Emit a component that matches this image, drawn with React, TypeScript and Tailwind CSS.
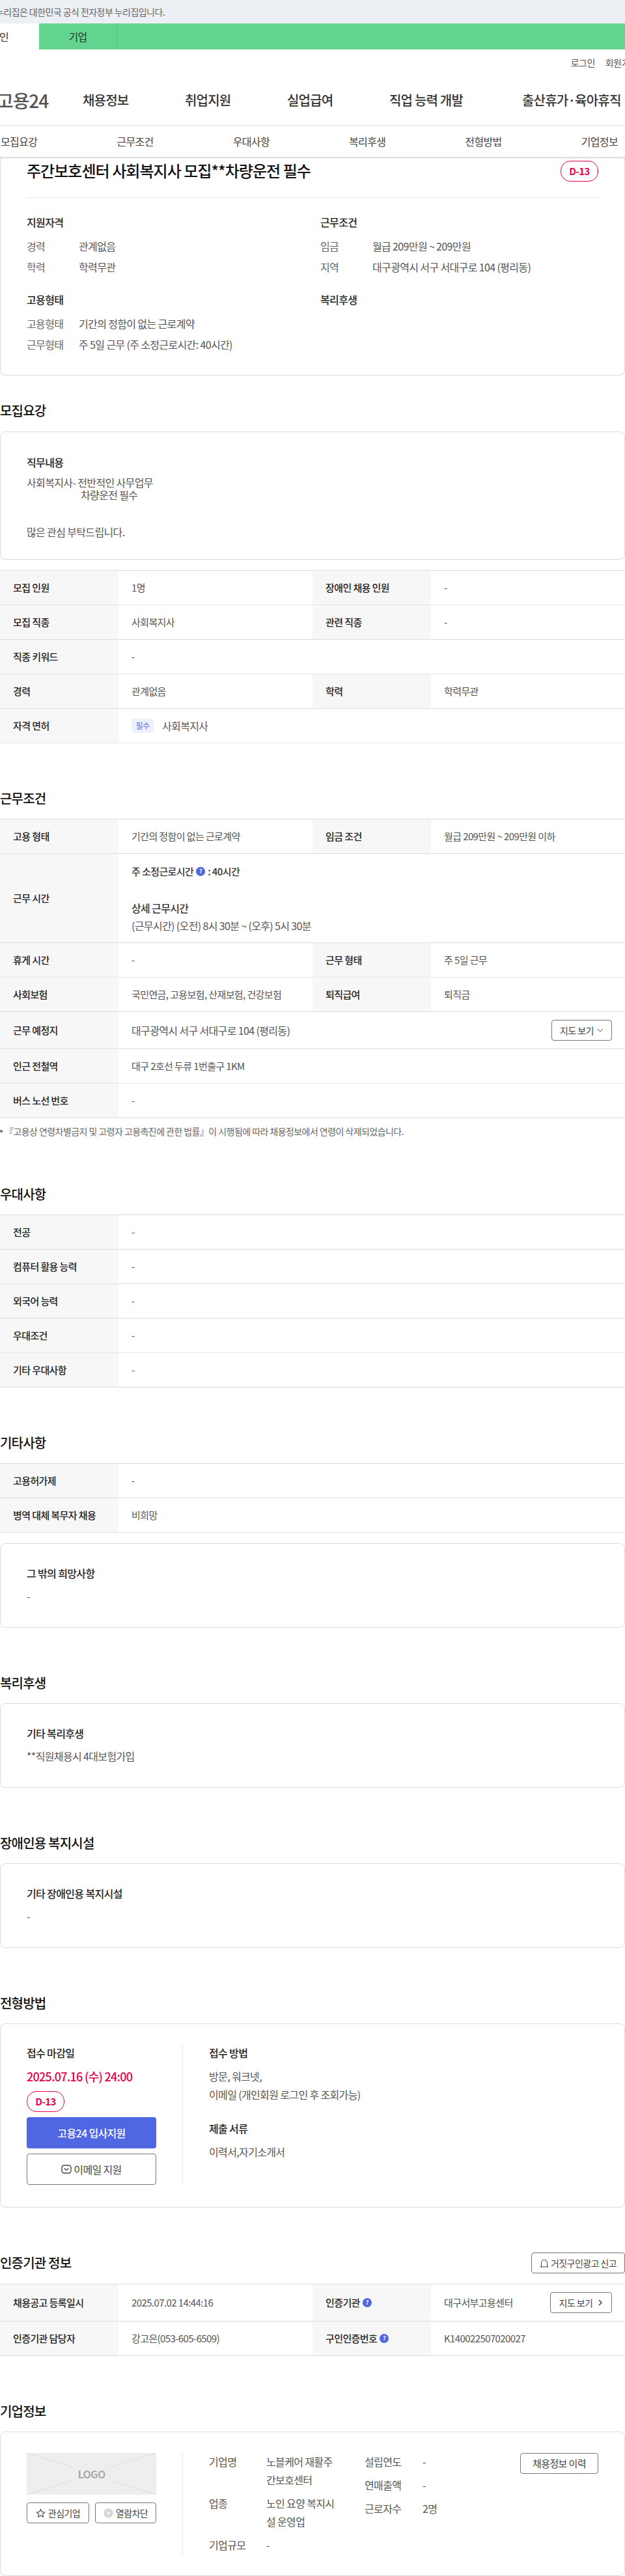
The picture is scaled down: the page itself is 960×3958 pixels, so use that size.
import type { ReactNode } from 'react';

type Cell = { label: ReactNode; value: ReactNode };

function Help() {
  return (
    <span className="inline-flex w-[14px] h-[14px] rounded-full bg-[#4f67e3] text-white text-[9px] font-bold items-center justify-center mx-[4px]">?</span>
  );
}

function Row({ cells, h = 'h-[53px]', thick = false }: { cells: Cell[]; h?: string; thick?: boolean }) {
  return (
    <div className={`flex border-b ${thick ? 'border-[#dddddd]' : 'border-[#e5e5e5]'} ${h}`}>
      {cells.map((c, i) => (
        <div key={i} className={`flex ${cells.length === 1 ? 'flex-1' : 'w-[480px]'}`}>
          <div className="w-[182px] shrink-0 bg-[#f7f7f7] pl-[20px] flex items-center font-medium text-[#222222]">{c.label}</div>
          <div className="flex-1 pl-[20px] flex items-center text-[#555555]">{c.value}</div>
        </div>
      ))}
    </div>
  );
}

function Heading({ children, className = '' }: { children: ReactNode; className?: string }) {
  return <h2 className={`text-[20px] font-medium text-[#111111] leading-[28px] ${className}`}>{children}</h2>;
}

function Table({ children, className = 'mt-[17px]' }: { children: ReactNode; className?: string }) {
  return <div className={`${className} border-t border-[#dddddd] text-[15px]`}>{children}</div>;
}

function TextCard({ title, text, className = 'mt-[17px]' }: { title: string; text: string; className?: string }) {
  return (
    <div className={`border border-[#dddddd] rounded-[8px] px-[40px] pt-[33px] h-[130px] text-[16px] ${className}`}>
      <div className="font-medium text-[#222222] leading-[24px]">{title}</div>
      <div className="mt-[11px] text-[#555555] leading-[24px]">{text}</div>
    </div>
  );
}

function Badge() {
  return (
    <span className="inline-flex w-[58px] h-[32px] rounded-[15px] border border-[#e6004d] text-[#e6004d] items-center justify-center text-[15px] font-semibold">D-13</span>
  );
}

function Spec({ k, v, first = false }: { k: string; v: string; first?: boolean }) {
  return (
    <div className={`flex leading-[24px] ${first ? 'mt-[13px]' : 'mt-[8px]'}`}>
      <span className="w-[80px] shrink-0 text-[#666666]">{k}</span>
      <span className="text-[#555555]">{v}</span>
    </div>
  );
}

export default function App() {
  return (
    <div className='font-["Noto_Sans_CJK_KR","Noto_Sans",sans-serif] w-[960px] h-[3958px] overflow-hidden bg-white text-[16px] [&_*]:tracking-[-0.04em]'>
      <div className="h-[36px] bg-[#eceff4] flex items-center text-[14px] text-[#666666] whitespace-nowrap">
        <span className="-ml-[7px]">누리집은 대한민국 공식 전자정부 누리집입니다.</span>
      </div>
      <div className="h-[40px] flex bg-[#62d490] text-[#333333] text-[16px]">
        <div className="w-[60px] bg-white flex items-center"><span className="-ml-[15px]">개인</span></div>
        <div className="w-[120px] border-r border-[#58c585] flex items-center justify-center">기업</div>
      </div>
      <div className="h-[40px] flex justify-end items-center gap-[16px] text-[14px] text-[#555555] whitespace-nowrap">
        <span>로그인</span>
        <span className="-mr-[19px]">회원가입</span>
      </div>
      <div className="h-[77px] border-b border-[#eeeeee] flex items-center text-[20px] font-medium text-[#333333] whitespace-nowrap">
        <div className="w-[74px] shrink-0 flex justify-end">
          <span className="text-[28px] text-[#555555] font-medium">고용24</span>
        </div>
        <nav className="flex ml-[53px]">
          <span className="w-[157px]">채용정보</span>
          <span className="w-[157px]">취업지원</span>
          <span className="w-[157px]">실업급여</span>
          <span className="w-[204px]">직업 능력 개발</span>
          <span>출산휴가·육아휴직</span>
        </nav>
      </div>
      <div className="h-[48px] flex justify-between items-center pl-[1px] pr-[11px] text-[#444444] shadow-[0_1px_3px_rgba(0,0,0,0.25)] relative z-10 bg-white">
        <span>모집요강</span>
        <span>근무조건</span>
        <span>우대사항</span>
        <span>복리후생</span>
        <span>전형방법</span>
        <span>기업정보</span>
      </div>

      {/* 요약 카드 */}
      <section className="border border-t-0 border-[#dddddd] rounded-b-[8px] h-[336px] px-[40px]">
        <div className="flex justify-between border-b border-[#e8e8e8] h-[63px] pt-[5px]">
          <h1 className="text-[24px] font-medium text-[#111111] leading-[32px]">주간보호센터 사회복지사 모집**차량운전 필수</h1>
          <span className="mt-[1px]"><Badge /></span>
        </div>
        <div className="flex mt-[25px]">
          <div className="w-[451px]">
            <div className="font-medium text-[#222222] leading-[24px]">지원자격</div>
            <Spec first k="경력" v="관계없음" />
            <Spec k="학력" v="학력무관" />
            <div className="font-medium text-[#222222] leading-[24px] mt-[26px]">고용형태</div>
            <Spec first k="고용형태" v="기간의 정함이 없는 근로계약" />
            <Spec k="근무형태" v="주 5일 근무 (주 소정근로시간: 40시간)" />
          </div>
          <div>
            <div className="font-medium text-[#222222] leading-[24px]">근무조건</div>
            <Spec first k="임금" v="월급 209만원 ~ 209만원" />
            <Spec k="지역" v="대구광역시 서구 서대구로 104 (평리동)" />
            <div className="font-medium text-[#222222] leading-[24px] mt-[26px]">복리후생</div>
          </div>
        </div>
      </section>

      <Heading className="mt-[40px]">모집요강</Heading>
      <div className="mt-[18px] border border-[#dddddd] rounded-[8px] h-[197px] px-[40px] pt-[34px] text-[#555555] leading-[19px]">
        <div className="font-medium text-[#222222] leading-[24px]">직무내용</div>
        <div className="mt-[10px]">사회복지사- 전반적인 사무업무</div>
        <div className="pl-[83px]">차량운전 필수</div>
        <div className="mt-[38px]">많은 관심 부탁드립니다.</div>
      </div>
      <Table className="mt-[16px]">
        <Row cells={[{ label: '모집 인원', value: '1명' }, { label: '장애인 채용 인원', value: '-' }]} />
        <Row thick cells={[{ label: '모집 직종', value: '사회복지사' }, { label: '관련 직종', value: '-' }]} />
        <Row cells={[{ label: '직종 키워드', value: '-' }]} />
        <Row thick cells={[{ label: '경력', value: '관계없음' }, { label: '학력', value: '학력무관' }]} />
        <Row
          cells={[{
            label: '자격 면허',
            value: (
              <span className="flex items-center gap-[13px]">
                <span className="w-[34px] h-[22px] rounded-[4px] bg-[#eef0fd] text-[#5b6ee8] text-[12px] flex items-center justify-center">필수</span>
                <span className="text-[16px]">사회복지사</span>
              </span>
            ),
          }]}
        />
      </Table>

      <Heading className="mt-[71px]">근무조건</Heading>
      <Table>
        <Row thick cells={[{ label: '고용 형태', value: '기간의 정함이 없는 근로계약' }, { label: '임금 조건', value: '월급 209만원 ~ 209만원 이하' }]} />
        <Row
          h="h-[137px]"
          thick
          cells={[{
            label: '근무 시간',
            value: (
              <div className="leading-[24px] text-[16px]">
                <div className="font-medium text-[#333333] flex items-center text-[15px]">주 소정근로시간<Help />: 40시간</div>
                <div className="font-medium text-[#333333] mt-[32px]">상세 근무시간</div>
                <div className="mt-[3px]">(근무시간) (오전) 8시 30분 ~ (오후) 5시 30분</div>
              </div>
            ),
          }]}
        />
        <Row cells={[{ label: '휴게 시간', value: '-' }, { label: '근무 형태', value: '주 5일 근무' }]} />
        <Row thick cells={[{ label: '사회보험', value: '국민연금, 고용보험, 산재보험, 건강보험' }, { label: '퇴직급여', value: '퇴직금' }]} />
        <Row
          h="h-[57px]"
          thick
          cells={[{
            label: '근무 예정지',
            value: (
              <div className="flex flex-1 items-center justify-between pr-[20px] text-[16px]">
                <span>대구광역시 서구 서대구로 104 (평리동)</span>
                <button className="w-[93px] h-[32px] border border-[#777777] rounded-[4px] text-[#444444] text-[14px] flex items-center justify-center gap-[5px]">
                  지도 보기
                  <svg width="10" height="10" viewBox="0 0 10 10" fill="none" stroke="#444444"><path d="M1 3l4 4 4-4" /></svg>
                </button>
              </div>
            ),
          }]}
        />
        <Row cells={[{ label: '인근 전철역', value: '대구 2호선 두류 1번출구 1KM' }]} />
        <Row thick cells={[{ label: '버스 노선 번호', value: '-' }]} />
      </Table>
      <div className="mt-[10px] flex items-center text-[14px] text-[#666666] leading-[20px] whitespace-nowrap">
        <span className="w-[4px] h-[4px] rounded-full bg-[#666666] mr-[3px] shrink-0" />
        『고용상 연령차별금지 및 고령자 고용촉진에 관한 법률』이 시행됨에 따라 채용정보에서 연령이 삭제되었습니다.
      </div>

      <Heading className="mt-[73px]">우대사항</Heading>
      <Table>
        <Row thick cells={[{ label: '전공', value: '-' }]} />
        <Row thick cells={[{ label: '컴퓨터 활용 능력', value: '-' }]} />
        <Row thick cells={[{ label: '외국어 능력', value: '-' }]} />
        <Row cells={[{ label: '우대조건', value: '-' }]} />
        <Row thick cells={[{ label: '기타 우대사항', value: '-' }]} />
      </Table>

      <Heading className="mt-[71px]">기타사항</Heading>
      <Table>
        <Row thick cells={[{ label: '고용허가제', value: '-' }]} />
        <Row cells={[{ label: '병역 대체 복무자 채용', value: '비희망' }]} />
      </Table>
      <TextCard className="mt-[16px]" title="그 밖의 희망사항" text="-" />

      <Heading className="mt-[71px]">복리후생</Heading>
      <TextCard title="기타 복리후생" text="**직원채용시 4대보험가입" />
      <Heading className="mt-[71px]">장애인용 복지시설</Heading>
      <TextCard title="기타 장애인용 복지시설" text="-" />

      <Heading className="mt-[71px]">전형방법</Heading>
      <div className="mt-[17px] border border-[#dddddd] rounded-[8px] h-[283px] px-[40px] pt-[32px] flex">
        <div className="w-[240px] pr-[40px] border-r border-[#e8e8e8] h-[216px] shrink-0">
          <div className="font-medium text-[#222222] leading-[24px]">접수 마감일</div>
          <div className="mt-[12px] text-[#e6004d] font-medium text-[18px] leading-[24px] whitespace-nowrap">2025.07.16 (수) 24:00</div>
          <div className="mt-[11px] h-[32px]"><Badge /></div>
          <button className="mt-[8px] w-[199px] h-[48px] rounded-[4px] bg-[#4f67e3] text-white font-medium block">고용24 입사지원</button>
          <button className="mt-[8px] w-[199px] h-[48px] rounded-[4px] border border-[#777777] text-[#444444] flex items-center justify-center gap-[3px]">
            <svg width="16" height="16" viewBox="0 0 16 16" fill="none" stroke="#444444" strokeWidth="1.4">
              <rect x="1" y="2" width="14" height="12" rx="3.5" />
              <path d="M4.5 6.5L8 9.5l3.5-3" />
            </svg>
            이메일 지원
          </button>
        </div>
        <div className="pl-[40px] text-[#555555]">
          <div className="font-medium text-[#222222] leading-[24px]">접수 방법</div>
          <div className="mt-[10px] leading-[28px]">방문, 워크넷,<br />이메일 (개인회원 로그인 후 조회가능)</div>
          <div className="font-medium text-[#222222] leading-[24px] mt-[26px]">제출 서류</div>
          <div className="mt-[10px] leading-[28px]">이력서,자기소개서</div>
        </div>
      </div>

      <div className="mt-[69px] flex justify-between items-center">
        <Heading>인증기관 정보</Heading>
        <button className="w-[144px] h-[32px] border border-[#777777] rounded-[4px] text-[#444444] text-[14px] flex items-center justify-center gap-[3px]">
          <svg width="14" height="14" viewBox="0 0 14 14" fill="none" stroke="#444444" strokeWidth="1"><path d="M2.5 13V6.5a4.5 4.5 0 019 0V13M.5 13h13M8.5 4.5l1 1" /></svg>
          거짓구인광고 신고
        </button>
      </div>
      <Table className="mt-[16px]">
        <Row
          h="h-[57px]"
          thick
          cells={[
            { label: '채용공고 등록일시', value: '2025.07.02 14:44:16' },
            {
              label: <>인증기관<Help /></>,
              value: (
                <div className="flex flex-1 items-center justify-between pr-[20px]">
                  <span>대구서부고용센터</span>
                  <button className="w-[95px] h-[32px] border border-[#777777] rounded-[4px] text-[#444444] text-[14px] flex items-center justify-center gap-[8px]">
                    지도 보기
                    <svg width="8" height="12" viewBox="0 0 8 12" fill="none" stroke="#444444" strokeWidth="1.6"><path d="M2 2l4 4-4 4" /></svg>
                  </button>
                </div>
              ),
            },
          ]}
        />
        <Row
          thick
          cells={[{ label: '인증기관 담당자', value: '강고은(053-605-6509)' }, { label: <>구인인증번호<Help /></>, value: 'K140022507020027' }]}
        />
      </Table>

      <Heading className="mt-[71px]">기업정보</Heading>
      <div className="mt-[17px] border border-[#dddddd] rounded-[8px] h-[222px] px-[40px] pt-[32px] flex">
        <div className="w-[240px] pr-[40px] border-r border-[#e8e8e8] h-[156px] shrink-0">
          <div className="relative w-[199px] h-[64px] bg-[#eeeeee] flex items-center justify-center text-[#aaaaaa] font-semibold text-[16px]">
            <svg className="absolute inset-0" width="199" height="64" viewBox="0 0 199 64" stroke="#dddddd" fill="none"><path d="M0 0l72 22M199 0l-72 22M0 64l72-22M199 64l-72-22" /></svg>
            <span className="relative">LOGO</span>
          </div>
          <div className="flex gap-[9px] mt-[12px] text-[14px]">
            <button className="w-[96px] h-[32px] border border-[#777777] rounded-[4px] text-[#444444] flex items-center justify-center gap-[4px]">
              <svg width="15" height="15" viewBox="0 0 24 24" fill="none" stroke="#444444" strokeWidth="1.8"><path d="M12 2.5l3 6.3 6.9.9-5 4.8 1.3 6.8-6.2-3.3-6.2 3.3 1.3-6.8-5-4.8 6.9-.9z" /></svg>
              관심기업
            </button>
            <button className="w-[94px] h-[32px] border border-[#777777] rounded-[4px] text-[#444444] flex items-center justify-center gap-[4px]">
              <svg width="15" height="15" viewBox="0 0 16 16"><circle cx="8" cy="8" r="7.5" fill="#d5d5d5" /><path d="M5.5 5.5l5 5M10.5 5.5l-5 5" stroke="#ffffff" strokeWidth="1.3" /></svg>
              열람차단
            </button>
          </div>
        </div>
        <div className="pl-[40px] flex-1 flex text-[#555555] leading-[28px] -mt-[1px]">
          <div className="w-[239px] shrink-0">
            <div className="flex"><span className="w-[88px] shrink-0">기업명</span><span className="w-[110px] break-all">노블케어 재활주간보호센터</span></div>
            <div className="flex mt-[8px]"><span className="w-[88px] shrink-0">업종</span><span className="w-[110px] break-all">노인 요양 복지시설 운영업</span></div>
            <div className="flex mt-[8px]"><span className="w-[88px] shrink-0">기업규모</span><span>-</span></div>
          </div>
          <div className="flex-1">
            <div className="flex"><span className="w-[89px]">설립연도</span><span>-</span></div>
            <div className="flex mt-[8px]"><span className="w-[89px]">연매출액</span><span>-</span></div>
            <div className="flex mt-[8px]"><span className="w-[89px]">근로자수</span><span>2명</span></div>
          </div>
          <button className="w-[120px] h-[32px] mt-[1px] border border-[#777777] rounded-[4px] text-[#444444] text-[15px] leading-[20px] shrink-0">채용정보 이력</button>
        </div>
      </div>
    </div>
  );
}
